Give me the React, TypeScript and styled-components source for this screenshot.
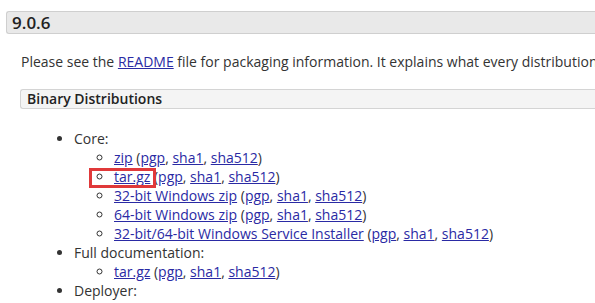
import React from "react";
import styled, { createGlobalStyle } from "styled-components";

const GlobalStyle = createGlobalStyle`
  html, body {
    margin: 0;
    padding: 0;
    background: #fff;
    overflow: hidden;
  }
  body {
    font-family: "Open Sans", "Liberation Sans", sans-serif;
    font-size: 14px;
    color: #333;
  }
`;

const Page = styled.div`
  width: 720px;
  padding-top: 11px;
`;

const VersionHeader = styled.h3`
  margin: 0 0 0 6px;
  height: 21px;
  line-height: 21px;
  padding-left: 5px;
  font-size: 17px;
  font-weight: 600;
  color: #222;
  background: #e9e9e9;
  border: 1px solid #cfcfcf;
  border-right: none;
  border-radius: 3px 0 0 3px;
`;

const Intro = styled.p`
  margin: 18px 0 0 21px;
  line-height: 19px;
`;

const SubHeader = styled.h4`
  margin: 18px 0 0 20px;
  height: 18px;
  line-height: 18px;
  padding-left: 6px;
  font-size: 14px;
  font-weight: 600;
  color: #222;
  background: #f4f4f4;
  border: 1px solid #d4d4d4;
  border-right: none;
  border-radius: 3px 0 0 3px;
`;

const List = styled.ul<{ $nested?: boolean }>`
  margin: ${(p) => (p.$nested ? "0" : "20px 0 0 0")};
  padding-left: ${(p) => (p.$nested ? "40px" : "74px")};
  list-style-type: ${(p) => (p.$nested ? "circle" : "disc")};
  line-height: 19px;
`;

const Item = styled.li`
  position: relative;
`;

const Link = styled.a`
  color: #2a2aa4;
  text-decoration: underline;
`;

const Highlight = styled.span`
  position: absolute;
  left: -25px;
  top: 1px;
  width: 67px;
  height: 20px;
  box-sizing: border-box;
  border: 3px solid #e0393a;
  pointer-events: none;
`;

function Sums() {
  return (
    <>
      {" ("}
      <Link href="#">pgp</Link>, <Link href="#">sha1</Link>,{" "}
      <Link href="#">sha512</Link>)
    </>
  );
}

function Download({ label, marked }: { label: string; marked?: boolean }) {
  return (
    <Item>
      <Link href="#">{label}</Link>
      <Sums />
      {marked && <Highlight />}
    </Item>
  );
}

export default function App() {
  return (
    <>
      <GlobalStyle />
      <Page>
        <VersionHeader>9.0.6</VersionHeader>
        <Intro>
          Please see the <Link href="#">README</Link> file for packaging
          information. It explains what every distribution contains.
        </Intro>
        <SubHeader>Binary Distributions</SubHeader>
        <List>
          <Item>
            Core:
            <List $nested>
              <Download label="zip" />
              <Download label="tar.gz" marked />
              <Download label="32-bit Windows zip" />
              <Download label="64-bit Windows zip" />
              <Download label="32-bit/64-bit Windows Service Installer" />
            </List>
          </Item>
          <Item>
            Full documentation:
            <List $nested>
              <Download label="tar.gz" />
            </List>
          </Item>
          <Item>Deployer:</Item>
        </List>
      </Page>
    </>
  );
}
